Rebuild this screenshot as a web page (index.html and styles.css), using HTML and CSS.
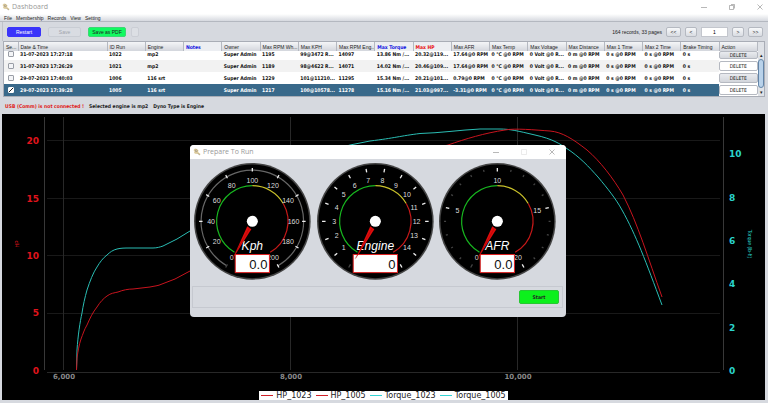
FILE: index.html
```
<!DOCTYPE html>
<html lang="en">
  <head>
    <meta charset="UTF-8" />
    <meta name="viewport" content="width=device-width, initial-scale=1.0" />
    <title>Dashboard</title>
    <link rel="stylesheet" href="styles.css">
  </head>
  <body>
    <header class="titlebar">
      <svg class="app-icon" viewBox="0 0 16 16">
        <path d="M4 1l4 1 3 3-1 3 5 4-1 2-5-3-3 1-4-2 1-3-2-3z" fill="#dccb9c" />
        <path d="M5 4h3v3H5zM9 11l5 3" stroke="#8d7f62" fill="#f6f1e2" />
      </svg>
      <h1>Dashboard</h1>
      <div class="window-buttons">
        <svg viewBox="0 0 8 8"><path d="M1 4.500h6" /></svg>
        <svg viewBox="0 0 8 8"><path d="M1.500 2.500h4v4h-4zM3 1.500h3.500v4" /></svg>
        <svg viewBox="0 0 8 8"><path d="M1.500 1.500l5 5M6.500 1.500l-5 5" /></svg>
      </div>
    </header>

    <nav class="menubar">
      <a href="#">File</a>
      <a href="#">Membership</a>
      <a href="#">Records</a>
      <a href="#">View</a>
      <a href="#">Setting</a>
    </nav>

    <div class="toolbar">
      <button class="btn restart">Restart</button>
      <button class="btn save" disabled>Save</button>
      <button class="btn pdf">Save as PDF</button>
      <button class="btn blank" aria-label="More"></button>
      <span class="records">164 records, 33 pages</span>
      <button class="btn page">&lt;&lt;</button>
      <button class="btn page small">&lt;</button>
      <input class="page-input" type="text" value="1" aria-label="Page" />
      <button class="btn page small">&gt;</button>
      <button class="btn page">&gt;&gt;</button>
    </div>

    <div class="runs">
      <table>
        <colgroup>
          <col class="col-select" />
          <col class="col-date" />
          <col span="17" />
        </colgroup>
        <thead>
          <tr>
            <th>Se...</th>
            <th>Date &amp; Time</th>
            <th>ID Run</th>
            <th>Engine</th>
            <th class="blue">Notes</th>
            <th>Owner</th>
            <th>Max RPM Wh...</th>
            <th>Max KPH</th>
            <th>Max RPM Eng...</th>
            <th class="blue">Max Torque</th>
            <th class="red">Max HP</th>
            <th>Max AFR</th>
            <th>Max Temp</th>
            <th>Max Voltage</th>
            <th>Max Distance</th>
            <th>Max 1 Time</th>
            <th>Max 2 Time</th>
            <th>Brake Timing</th>
            <th>Action</th>
          </tr>
        </thead>
        <tbody id="runRows"></tbody>
      </table>
      <div class="scrollbar">
        <span class="arrow">▴</span>
        <span class="thumb"></span>
        <span class="arrow">▾</span>
      </div>
    </div>

    <div class="status">
      <span class="error">USB (Comm) is not connected !</span>
      <span>Selected engine is mp2</span>
      <span>Dyno Type is Engine</span>
    </div>

    <main class="chart">
      <svg class="plot" viewBox="2 114 763 286">
        <g class="grid">
          <path d="M47 140.500H720M47 198.500H720M47 255.500H720M47 313.500H720" />
          <path class="strong" d="M47 372.500H720M63.500 117V370M290.500 117V370M517.500 117V370" />
          <path class="axis" d="M44.500 117V370M723.500 117V370" />
        </g>
        <g class="hp-label">
          <text x="39" y="144">20</text>
          <text x="39" y="202">15</text>
          <text x="39" y="259">10</text>
          <text x="39" y="316">5</text>
          <text x="39" y="374">0</text>
        </g>
        <g class="torque-label">
          <text x="729" y="157">10</text>
          <text x="729" y="201">8</text>
          <text x="729" y="244">6</text>
          <text x="729" y="287">4</text>
          <text x="729" y="331">2</text>
          <text x="729" y="374">0</text>
        </g>
        <g class="rpm-label">
          <text x="64" y="379">6,000</text>
          <text x="291" y="379">8,000</text>
          <text x="518" y="379">10,000</text>
        </g>
        <text class="axis-title hp" transform="translate(19 244) rotate(-90)">HP</text>
        <text class="axis-title torque" transform="translate(748 244) rotate(90)">Torque (lb-ft)</text>
        <path class="line torque" d="M76.500 370L77 350C78 335 80 322 82 313C83 306 85 297 87 290C90 281 93 273 97 267C100 262 103 258 107 255C110 252 113 250 117 249C121 248 125 248 129 248H153C157 248 160 247 163 246C168 244 172 241 177 239L190 231C240 200 290 160 350 145L370 141C395 138 400 136 420 133.500C440 133 460 130 480 129H500C510 129 518 131 535 135C553 139 560 144 566 148C580 157 589 167 598 177C608 189 616 199 622 210C636 235 646 262 662 305" />
        <path class="line hp" d="M76.500 370L77 358C78 351 79 345 81 339C83 334 84 330 87 325C90 318 93 312 97 307C100 302 104 298 107 296C111 293 114 293 118 292C123 290 128 289 133 289L150 287C154 286 158 286 162 284L175 279L190 271C280 220 360 165 448 145C465 139 485 133 505 130C515 128 535 130 550 131C562 132 573 139 587 150C600 161 613 178 623 195C638 224 648 258 662 297" />
      </svg>

      <ul class="legend">
        <li class="hp">HP_1023</li>
        <li class="hp">HP_1005</li>
        <li class="torque">Torque_1023</li>
        <li class="torque">Torque_1005</li>
      </ul>

      <section class="dialog" role="dialog" aria-labelledby="dialogTitle">
        <div class="dialog-title">
          <svg class="app-icon" viewBox="0 0 16 16">
            <path d="M4 1l4 1 3 3-1 3 5 4-1 2-5-3-3 1-4-2 1-3-2-3z" fill="#dccb9c" />
            <path d="M5 4h3v3H5zM9 11l5 3" stroke="#8d7f62" fill="#f6f1e2" />
          </svg>
          <h2 id="dialogTitle">Prepare To Run</h2>
          <div class="window-buttons">
            <svg viewBox="0 0 8 8"><path d="M1 4.500h6" /></svg>
            <svg class="off" viewBox="0 0 8 8"><path d="M1.500 1.500h5v5h-5z" /></svg>
            <svg viewBox="0 0 8 8"><path d="M1.500 1.500l5 5M6.500 1.500l-5 5" /></svg>
          </div>
        </div>
        <div class="gauges" id="gauges"></div>
        <div class="actions">
          <button class="btn start">Start</button>
        </div>
      </section>
    </main>

    <script src="script.js"></script>
  </body>
</html>
```
FILE: styles.css
```
* {
  margin: 0;
  padding: 0;
  box-sizing: border-box;
}

body {
  display: flex;
  flex-direction: column;
  min-height: 100vh;
  background: #d6d9df;
  color: #222;
  font-family: "Liberation Sans", Arial, sans-serif;
  font-size: 5px;
  line-height: 8px;
}

.titlebar {
  display: flex;
  align-items: center;
  height: 14px;
  padding: 0 4px 0 2px;
  gap: 2px;
  background: #fff;
}

.app-icon {
  width: 8px;
  height: 8px;
}

h1,
h2 {
  flex: 1;
  color: #999;
  font-family: "Open Sans", sans-serif;
  font-size: 7px;
  font-weight: normal;
}

.window-buttons {
  display: flex;
  gap: 20px;
}

.window-buttons svg {
  width: 8px;
  height: 8px;
  fill: none;
  stroke: #888;
  stroke-width: 0.6;
}

.window-buttons .off {
  stroke: #ddd;
}

.menubar {
  display: flex;
  gap: 4px;
  height: 8px;
  padding-left: 4px;
  background: linear-gradient(#fff, #d6d9df);
  border-bottom: 1px solid #b4b8c0;
}

.menubar a {
  color: #222;
  text-decoration: none;
}

.toolbar {
  display: flex;
  align-items: center;
  height: 19px;
  padding: 0 5px 0 4px;
  margin-left: 2px;
  border-left: 1px solid #bfc3ca;
}

.btn {
  height: 10px;
  border: 1px solid #b5b9c1;
  border-radius: 2px;
  background: linear-gradient(#f7f8fa, #d9dce2);
  color: #222;
  font-family: inherit;
  font-size: 5px;
  line-height: 8px;
  text-align: center;
}

.restart {
  width: 34px;
  margin-right: 7px;
  background: #3a34fa;
  border-color: #3a34fa;
  color: #fff;
}

.save {
  width: 33px;
  margin-right: 7px;
  background: #d9dce2;
  border-color: #c9cdd4;
  color: #a0a4ab;
}

.pdf {
  width: 38px;
  margin-right: 5px;
  background: #10fa60;
  border-color: #3bd873;
}

.blank {
  width: 8px;
  background: #dcdfe4;
  border-color: #cbced5;
}

.records {
  margin-left: auto;
  margin-right: 4px;
}

.page {
  width: 15px;
  margin-right: 4px;
}

.page.small {
  width: 12px;
}

.page:last-child {
  margin-right: 0;
}

.page-input {
  width: 27px;
  height: 10px;
  margin-right: 4px;
  border: 1px solid #c3c6cd;
  background: #fff;
  font-family: inherit;
  font-size: 5px;
  text-align: center;
}

.runs {
  display: flex;
  height: 56px;
  margin: 0 3px 0 3px;
  border: 1px solid #a9adb6;
}

table {
  flex: 1;
  width: 100%;
  table-layout: fixed;
  border-collapse: collapse;
}

.col-select {
  width: 14px;
}

.col-date {
  width: 89px;
}

th {
  height: 9px;
  padding-left: 2px;
  background: linear-gradient(#f4f5f7, #d3d6dc);
  border-right: 1px solid #b5b9c1;
  font-weight: normal;
  line-height: 8px;
  text-align: left;
  white-space: nowrap;
  overflow: hidden;
}

th.blue,
th.red {
  background: #eceef2;
  font-family: "DejaVu Sans Condensed", sans-serif;
  font-weight: bold;
}

th.blue {
  color: #1515e0;
}

th.red {
  color: #e81010;
}

td {
  height: 12px;
  padding-left: 2px;
  background: #fff;
  color: #111;
  font-family: "DejaVu Sans Condensed", sans-serif;
  font-weight: bold;
  line-height: 8px;
  white-space: nowrap;
  overflow: hidden;
}

tr.alt td {
  background: #f2f2f2;
}

tr.selected td {
  background: #39698a;
  color: #fff;
}

/* first visible row is half scrolled under the header */
tbody tr:first-child td {
  height: 9px;
  line-height: 7px;
  vertical-align: top;
}

td:first-child {
  padding: 0;
  text-align: center;
}

td input {
  display: block;
  appearance: none;
  width: 6px;
  height: 6px;
  margin: 0 auto;
  border: 1px solid #9a9ea6;
  border-radius: 1px;
  background: #f4f5f7;
}

td input:checked {
  border-color: #fff;
  background: linear-gradient(135deg, #fff 40%, #222 40%, #222 60%, #fff 60%);
}

tr td.action,
tr.selected td.action {
  padding: 0;
  background: #fff;
}

.delete {
  display: block;
  width: 100%;
  background: #fff;
  font-weight: normal;
}

.delete.shade {
  background: linear-gradient(#e9ebef, #d3d6dc);
}

tbody tr:first-child .delete {
  height: 8px;
  line-height: 6px;
}

.scrollbar {
  display: flex;
  flex-direction: column;
  align-items: center;
  width: 6px;
  padding-top: 9px;
  background: #dfe2e7;
}

.thumb {
  flex: 1;
  width: 6px;
  border: 1px solid #6385a8;
  border-radius: 3px;
  background: #b9d2ea;
}

.status {
  display: flex;
  align-items: center;
  gap: 5px;
  height: 17px;
  padding-left: 5px;
  font-family: "DejaVu Sans Condensed", sans-serif;
  font-weight: bold;
}

.error {
  color: #e02020;
}

.chart {
  position: relative;
  flex: 1;
  margin: 0 3px 3px 2px;
  background: #000;
}

.plot {
  display: block;
  width: 100%;
}

.grid path {
  fill: none;
  stroke: #191919;
}

.grid .strong {
  stroke: #282828;
}

.grid .axis {
  stroke: #383838;
}

.hp-label,
.torque-label,
.rpm-label {
  font-family: "DejaVu Sans", sans-serif;
  font-size: 9px;
  font-weight: bold;
}

.hp-label {
  fill: #e0141c;
  text-anchor: end;
}

.torque-label {
  fill: #2ad4cc;
}

.rpm-label {
  fill: #888;
  font-size: 7px;
  text-anchor: middle;
}

.axis-title {
  font-size: 5px;
  text-anchor: middle;
}

.axis-title.hp {
  fill: #e0141c;
}

.axis-title.torque {
  fill: #2ad4cc;
}

.line {
  fill: none;
}

.line.hp {
  stroke: #c8141e;
}

.line.torque {
  stroke: #2abdb4;
}

.legend {
  position: absolute;
  right: 0;
  bottom: 0;
  left: 0;
  display: flex;
  gap: 4px;
  width: max-content;
  height: 9px;
  margin: 0 auto;
  padding: 0 2px;
  background: #fff;
  color: #222;
  font-family: "DejaVu Sans", sans-serif;
  font-size: 8px;
  line-height: 8px;
  list-style: none;
}

.legend li {
  display: flex;
  align-items: center;
  gap: 3px;
}

.legend li::before {
  content: "";
  width: 12px;
  border-top: 1px solid #d02028;
}

.legend .torque::before {
  border-color: #35d5d5;
}

.dialog {
  position: absolute;
  top: 31px;
  left: 188px;
  width: 376px;
  padding-bottom: 9px;
  border-radius: 4px;
  background: #d6d9df;
  overflow: hidden;
}

.dialog-title {
  display: flex;
  align-items: center;
  gap: 2px;
  height: 14px;
  padding: 0 10px 0 3px;
  background: #fff;
}

.gauges {
  display: flex;
  padding: 2px 7px 0 1px;
}

.gauge {
  flex: 1;
  min-width: 0;
}

.gauge .label {
  fill: #ddd;
  font-size: 7px;
  text-anchor: middle;
}

.gauge .name {
  fill: #fff;
  font-size: 12px;
  font-style: italic;
  text-anchor: middle;
}

.gauge .value {
  fill: #111;
  font-size: 13px;
  text-anchor: end;
}

.actions {
  display: flex;
  justify-content: flex-end;
  align-items: center;
  height: 22px;
  margin: 4px 3px 0 2px;
  padding-right: 3px;
  border: 1px solid #c6c9d0;
}

.start {
  width: 40px;
  height: 14px;
  background: #0cf01c;
  border-color: #27c732;
  font-family: "DejaVu Sans Condensed", sans-serif;
  font-weight: bold;
}
```
FILE: script.js
```
const runs = [
  ["31-07-2023 17:27:18", "1022", "mp2", "", "Super Admin", "1195", "99@3472 R...", "14097", "13.86 Nm /...", "20.32@119...", "17.64@0 RPM"],
  ["31-07-2023 17:26:29", "1021", "mp2", "", "Super Admin", "1189", "98@4622 R...", "14071", "14.02 Nm /...", "20.46@109...", "17.64@0 RPM"],
  ["29-07-2023 17:40:03", "1006", "116 srt", "", "Super Admin", "1229", "101@11210...", "11295", "15.34 Nm /...", "20.21@101...", "0.79@0 RPM"],
  ["29-07-2023 17:39:28", "1005", "116 srt", "", "Super Admin", "1217", "100@10578...", "11278", "15.16 Nm /...", "21.03@997...", "-3.31@0 RPM"],
];
const tail = ["0 °C @0 RPM", "0 Volt @0 R...", "0 m @0 RPM", "0 s @0 RPM", "0 s @0 RPM", "0 s"];

document.getElementById("runRows").innerHTML = runs
  .map((run, i) => {
    const selected = i === 3;
    const cells = run.concat(tail).map((text) => `<td>${text}</td>`).join("");
    return `<tr class="${selected ? "selected" : i % 2 ? "alt" : ""}">
      <td><input type="checkbox" aria-label="Select run ${run[1]}" ${selected ? "checked" : ""} /></td>
      ${cells}
      <td class="action"><button class="btn delete ${i % 2 ? "" : "shade"}">DELETE</button></td>
    </tr>`;
  })
  .join("");

const gauges = [
  { name: "Kph", value: "0.0", max: 200, step: 20, label: 20, box: 34, ring: true },
  { name: "Engine", value: "0", max: 15, step: 1, label: 1, box: 44 },
  { name: "AFR", value: "0.0", max: 20, step: 1, label: 5, box: 34 },
];

// degrees are clockwise from the top, the scale runs from -150 to 150
function point(deg, r) {
  const a = (deg * Math.PI) / 180;
  return [(Math.sin(a) * r).toFixed(2), (-Math.cos(a) * r).toFixed(2)];
}

function arc(from, to, r, color, width) {
  const large = to - from > 180 ? 1 : 0;
  return `<path d="M${point(from, r)}A${r} ${r} 0 ${large} 1 ${point(to, r)}" fill="none" stroke="${color}" stroke-width="${width}" />`;
}

function drawGauge(g) {
  let out = `<circle r="58" fill="#444" /><circle r="56.500" fill="#000" />`;
  if (g.ring) out += arc(-150, 150, 51, "#666", 1.2);
  out += arc(-150, 0, 35.5, "#17b51f", 1.2);
  out += arc(0, 60, 35.5, "#c9c12a", 1.2);
  out += arc(60, 150, 35.5, "#c51818", 1.2);

  for (let v = 0; v <= g.max; v += g.step) {
    const deg = -150 + (v / g.max) * 300;
    const major = v % g.label === 0;
    const first = v === 0;
    out += `<path d="M${point(deg, major ? 49.5 : 51)}L${point(deg, 53)}" stroke="${major && !first ? "#eee" : "#444"}" stroke-width="1.3" />`;
    // the wide value box covers both ends of the engine scale
    const covered = g.box > 40 && (first || v === g.max);
    if (major && !covered) {
      const [x, y] = point(deg, 41);
      out += `<text class="label" x="${x}" y="${Number(y) + 2.5}">${v}</text>`;
    }
  }

  out += `<text class="name" y="29">${g.name}</text>`;
  out += `<rect x="${-g.box / 2}" y="33" width="${g.box}" height="18" fill="#fff" stroke="#d22" />`;
  out += `<text class="value" x="${g.box / 2 - 2}" y="47">${g.value}</text>`;
  out += `<path d="M-5 5L-20 38L-1 8z" fill="#e00c0c" />`;
  out += `<path d="M-3 7L-20 37" stroke="#8a0808" stroke-width="0.4" />`;
  out += `<circle r="5.500" fill="#fff" />`;
  return `<svg class="gauge" viewBox="-61 -60 122 120">${out}</svg>`;
}

document.getElementById("gauges").innerHTML = gauges.map(drawGauge).join("");
```
